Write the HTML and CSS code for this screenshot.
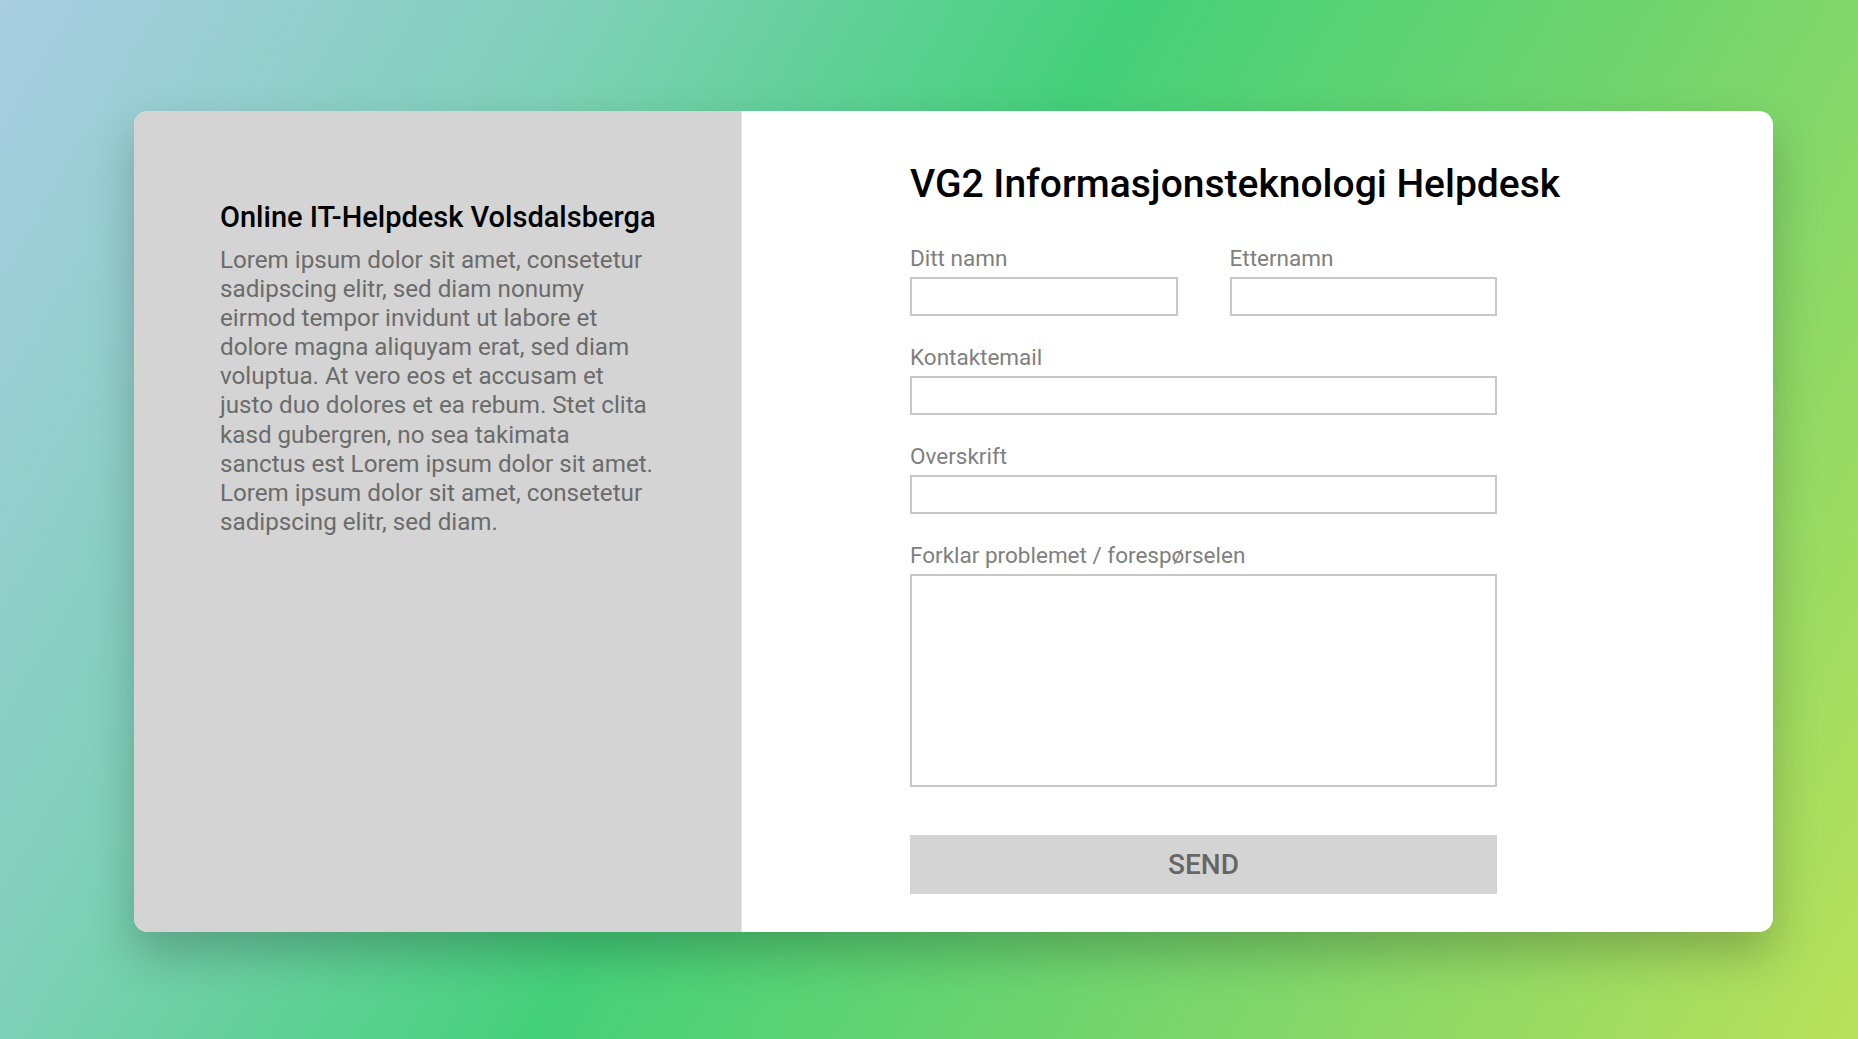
FILE: index.html
```html
<!DOCTYPE html>
<html lang="no">
<head>
<meta charset="utf-8">
<title>VG2 Informasjonsteknologi Helpdesk</title>
<link rel="stylesheet" href="styles.css">
</head>
<body>
<main class="card">
  <section class="info">
    <h2 class="info-title">Online IT-Helpdesk Volsdalsberga</h2>
    <p class="info-text">Lorem ipsum dolor sit amet, consetetur sadipscing elitr, sed diam nonumy eirmod tempor invidunt ut labore et dolore magna aliquyam erat, sed diam voluptua. At vero eos et accusam et justo duo dolores et ea rebum. Stet clita kasd gubergren, no sea takimata sanctus est Lorem ipsum dolor sit amet. Lorem ipsum dolor sit amet, consetetur sadipscing elitr, sed diam.</p>
  </section>
  <section class="form-panel">
    <h1 class="form-title">VG2 Informasjonsteknologi Helpdesk</h1>
    <form class="form">
      <div class="row">
        <label class="field">
          <span class="label">Ditt namn</span>
          <input class="input" type="text">
        </label>
        <label class="field">
          <span class="label">Etternamn</span>
          <input class="input" type="text">
        </label>
      </div>
      <label class="field">
        <span class="label">Kontaktemail</span>
        <input class="input" type="email">
      </label>
      <label class="field">
        <span class="label">Overskrift</span>
        <input class="input" type="text">
      </label>
      <label class="field">
        <span class="label">Forklar problemet / forespørselen</span>
        <textarea class="input textarea"></textarea>
      </label>
      <button class="send" type="button">SEND</button>
    </form>
  </section>
</main>
</body>
</html>
```
FILE: styles.css
```css
* { box-sizing: border-box; }
html, body { height: 100%; }
body {
  margin: 0;
  font-family: Roboto, "Liberation Sans", sans-serif;
  background: linear-gradient(120deg, #a9cde3 0%, #7fd0b8 24%, #45d07a 46%, #80d66a 75%, #b9e05a 100%);
  display: flex;
  align-items: flex-start;
  overflow: hidden;
}
.card {
  margin: 111px 0 0 134px;
  width: 1639px;
  height: 821px;
  display: flex;
  background: #fff;
  border-radius: 14px;
  overflow: hidden;
  box-shadow: 0 22px 45px rgba(0, 0, 0, 0.22);
}
.info {
  width: 608px;
  flex: none;
  background: #d4d4d4;
  padding: 90px 80px 0 86px;
  border-right: 1px solid #e6e6e6;
}
.info-title {
  margin: 0 0 12px;
  font-size: 29px;
  font-weight: 500;
  line-height: 33px;
  color: #000;
  white-space: nowrap;
}
.info-text {
  margin: 0;
  font-size: 24.2px;
  line-height: 29.1px;
  color: #6b6b6b;
  max-width: 440px;
}
.form-panel {
  flex: 1;
  padding: 50px 0 0 168px;
}
.form-title {
  margin: 0 0 37px;
  font-size: 39px;
  font-weight: 500;
  line-height: 47px;
  color: #000;
  white-space: nowrap;
}
.form {
  width: 587px;
  display: flex;
  flex-direction: column;
  gap: 28px;
}
.row {
  display: flex;
  gap: 52px;
}
.row .field { flex: 1; }
.field {
  display: flex;
  flex-direction: column;
  gap: 6px;
}
.label {
  font-size: 22.5px;
  line-height: 26px;
  color: #808080;
}
.input {
  height: 39px;
  border: 2px solid #c8c8c8;
  background: #fff;
  font: inherit;
  margin: 0;
  padding: 4px 8px;
  border-radius: 0;
  outline: none;
}
.textarea {
  height: 213px;
  resize: none;
}
.send {
  margin-top: 20px;
  height: 59px;
  border: none;
  background: #d4d4d4;
  color: #666;
  font-family: Roboto, "Liberation Sans", sans-serif;
  font-size: 28px;
  font-weight: 500;
  cursor: pointer;
  padding: 0;
}
```
